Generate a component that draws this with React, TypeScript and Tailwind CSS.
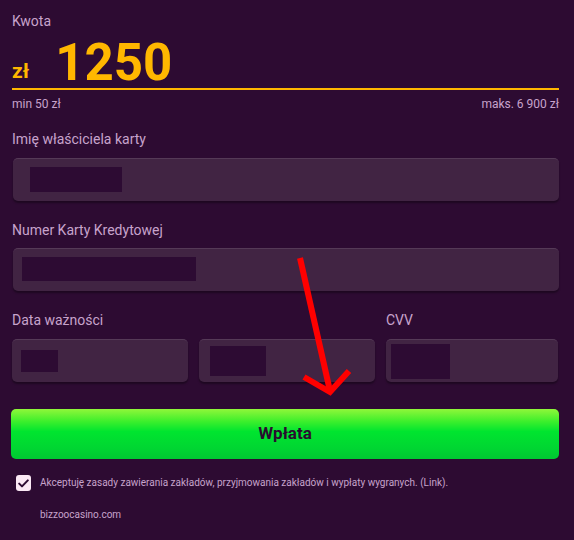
import React from "react";

const labelCls = "text-[14px] leading-[20px] text-[#c7a3cc]";
const inputCls =
  "h-[43px] rounded-[5px] bg-[#412443] border-t border-[#553a57] shadow-[0_2px_2px_rgba(0,0,0,0.35)] relative";

export default function App() {
  return (
    <div
      className="relative w-[574px] h-[540px] bg-[#2d0b32] overflow-hidden"
      style={{ fontFamily: "Roboto, 'Liberation Sans', sans-serif" }}
    >
      <div className="px-[12px] pt-[11px]">
        <div className={labelCls}>Kwota</div>
        <div className="flex items-end mt-[4px] h-[51px]">
          <span className="text-[21px] font-bold text-[#ffb700] leading-none mb-[4px]">zł</span>
          <span className="ml-[26px] text-[51px] font-bold text-[#ffb700] leading-none mb-[-2px]">1250</span>
        </div>
        <div className="mt-[2px] h-[2px] bg-[#ffb700] w-[547px]" />
        <div className="flex justify-between w-[547px] mt-[6px] text-[12px] leading-[16px] text-[#c7a3cc]">
          <span>min 50 zł</span>
          <span>maks. 6 900 zł</span>
        </div>

        <div className={labelCls + " mt-[17px]"}>Imię właściciela karty</div>
        <div className={inputCls + " mt-[9px] ml-[1px] w-[546px]"}>
          <div className="absolute left-[17px] top-[8px] w-[92px] h-[25px] bg-[#2d0b33]" />
        </div>

        <div className={labelCls + " mt-[19px]"}>Numer Karty Kredytowej</div>
        <div className={inputCls + " mt-[8px] ml-[1px] w-[546px]"}>
          <div className="absolute left-[9px] top-[8px] w-[174px] h-[24px] bg-[#2d0b33]" />
        </div>

        <div className="grid grid-cols-[176px_176px_172px] gap-x-[11px] mt-[19px]">
          <div className={labelCls + " col-span-2"}>Data ważności</div>
          <div className={labelCls}>CVV</div>
          <div className={inputCls + " mt-[9px]"}>
            <div className="absolute left-[9px] top-[10px] w-[37px] h-[22px] bg-[#2d0b33]" />
          </div>
          <div className={inputCls + " mt-[9px]"}>
            <div className="absolute left-[11px] top-[6px] w-[56px] h-[30px] bg-[#2d0b33]" />
          </div>
          <div className={inputCls + " mt-[9px]"}>
            <div className="absolute left-[5px] top-[4px] w-[59px] h-[35px] bg-[#2d0b33]" />
          </div>
        </div>

        <button
          className="mt-[27px] ml-[-1px] w-[548px] h-[50px] rounded-[5px] flex items-center justify-center text-[17px] font-bold text-[#2a0c2f]"
          style={{ background: "linear-gradient(180deg,#90f63a 0%,#3cef2c 25%,#00e52f 45%,#00d532 80%,#00c832 100%)" }}
        >
          Wpłata
        </button>

        <div className="flex items-center mt-[16px]">
          <div className="ml-[4px] w-[15px] h-[16px] rounded-[3px] bg-[#fbe9f5] flex items-center justify-center">
            <svg width="11" height="9" viewBox="0 0 11 9" fill="none">
              <path d="M1.2 4.6 L4 7.4 L9.8 1.4" stroke="#2d0b32" strokeWidth="2" strokeLinecap="round" strokeLinejoin="round" />
            </svg>
          </div>
          <span className="ml-[9px] text-[10px] leading-[16px] text-[#c7a3cc]">
            Akceptuję zasady zawierania zakładów, przyjmowania zakładów i wypłaty wygranych. (Link).
          </span>
        </div>
        <div className="mt-[16px] ml-[28px] text-[10px] leading-[16px] text-[#c7a3cc]">bizzoocasino.com</div>
      </div>

      <svg className="absolute left-0 top-0 pointer-events-none" width="574" height="540">
        <line x1="300" y1="258" x2="330" y2="391" stroke="#ff0000" strokeWidth="6" />
        <polyline points="304,377 330,392 349,371" fill="none" stroke="#ff0000" strokeWidth="6" />
      </svg>
    </div>
  );
}
